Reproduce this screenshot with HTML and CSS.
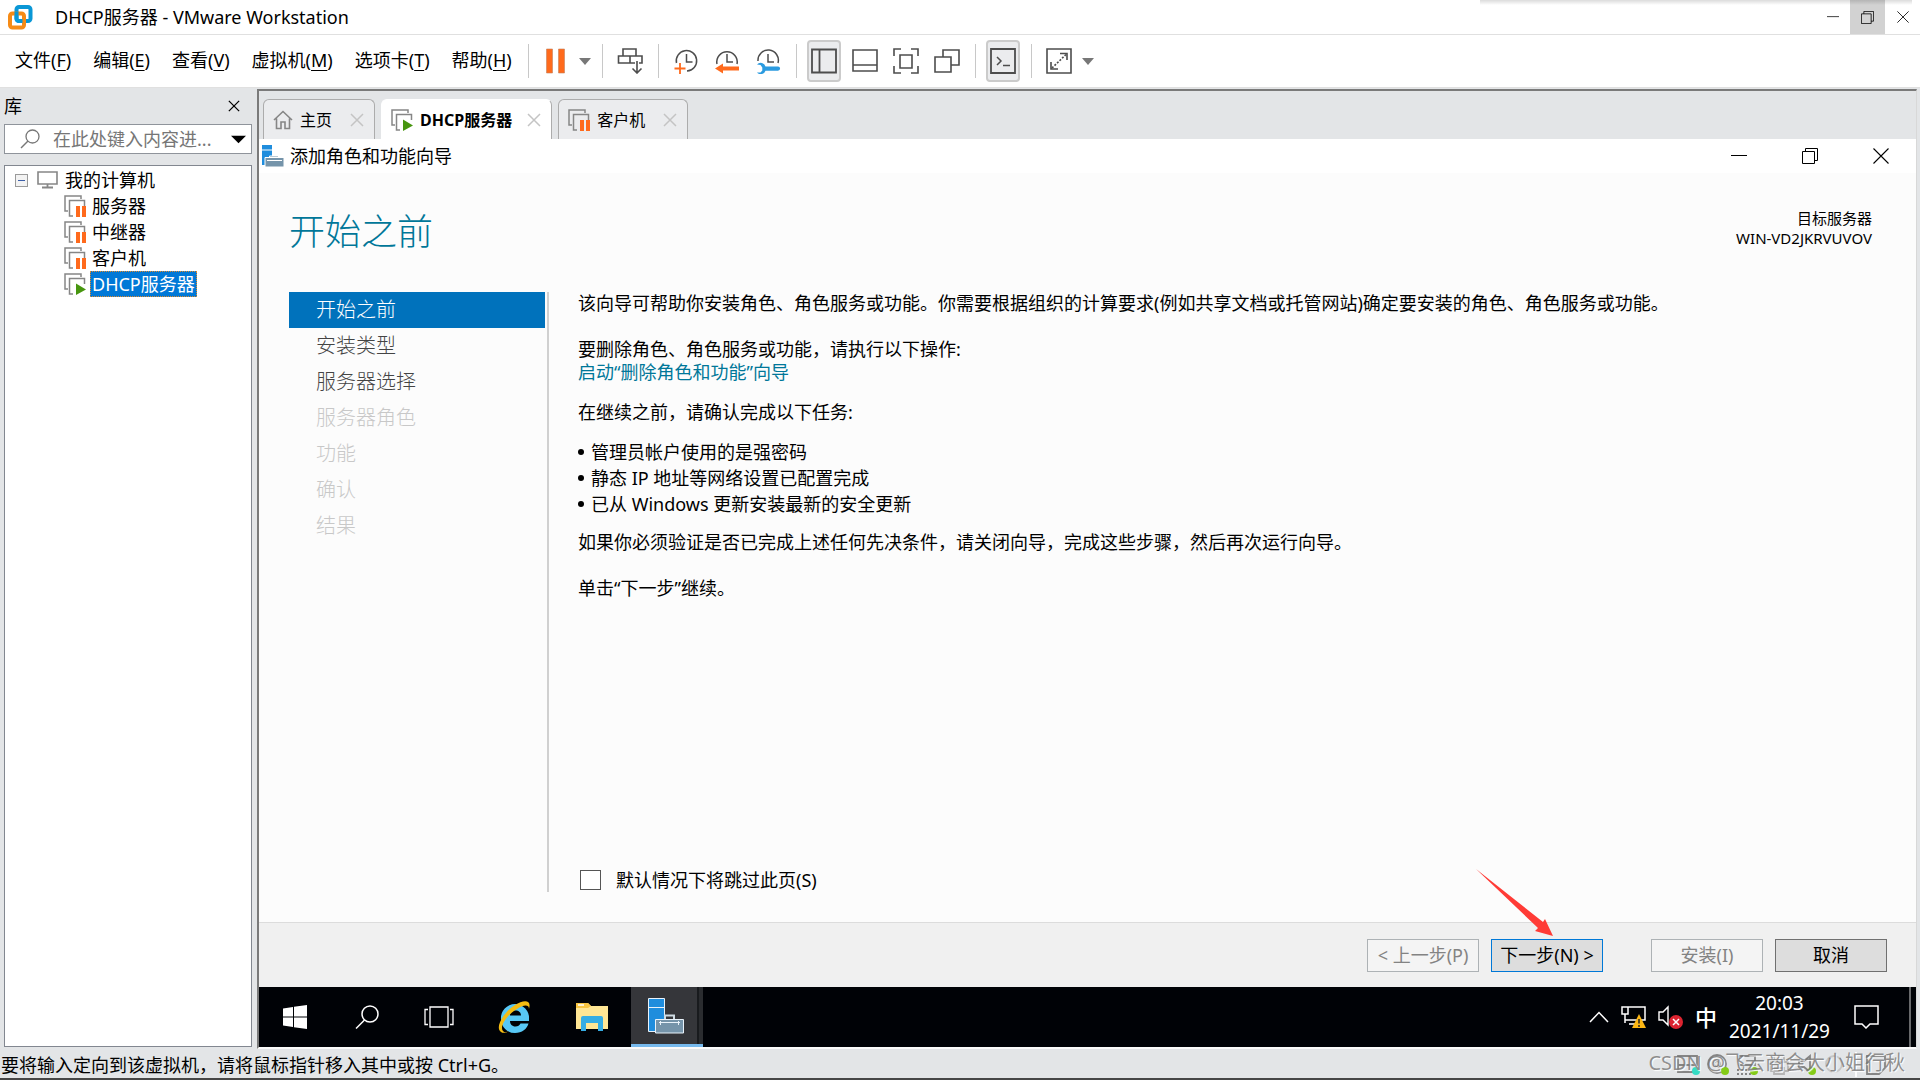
FILE: index.html
```html
<!DOCTYPE html>
<html lang="zh-CN">
<head>
<meta charset="utf-8">
<title>DHCP服务器 - VMware Workstation</title>
<link rel="stylesheet" href="styles.css">
</head>
<body>
<svg class="defs" aria-hidden="true">
  <symbol id="vm-base" viewBox="0 0 22 22">
    <path d="M4 16H1V1h16v3" fill="none" stroke="#868686" stroke-width="1.5"/>
    <path d="M9 21H5.500V5.500H20.500V11" fill="none" stroke="#868686" stroke-width="1.500"/>
  </symbol>
  <symbol id="vm-paused" viewBox="0 0 22 22">
    <use href="#vm-base"/>
    <path d="M12 11h4v11h-4zM18 11h4v11h-4z" fill="#ff6a1c"/>
  </symbol>
  <symbol id="vm-running" viewBox="0 0 22 22">
    <use href="#vm-base"/>
    <path d="M12 10.500v11.500L22 16.500z" fill="#47960f"/>
  </symbol>
  <symbol id="cross" viewBox="0 0 14 14">
    <path d="M1 1l12 12M13 1L1 13" fill="none" stroke="currentColor" stroke-width="1.500"/>
  </symbol>
  <symbol id="win-close" viewBox="0 0 16 16">
    <path d="M.5.500l15 15M15.500.500l-15 15" fill="none" stroke="currentColor" stroke-width="1.100"/>
  </symbol>
  <symbol id="win-restore" viewBox="0 0 16 16">
    <path d="M.500 3.500h12v12H.500zM3.500 3.500v-3h12v12h-3" fill="none" stroke="currentColor"/>
  </symbol>
  <symbol id="win-min" viewBox="0 0 16 16">
    <path d="M0 7.500h16" fill="none" stroke="currentColor"/>
  </symbol>
</svg>

<header class="titlebar">
  <div class="titlebar-shade"></div>
  <svg class="app-logo" viewBox="0 0 25 25" aria-hidden="true">
    <rect x="8.500" y="2" width="14" height="14" rx="2.500" fill="none" stroke="#0a97d6" stroke-width="4"/>
    <rect x="2" y="8.500" width="14" height="14" rx="2.500" fill="none" stroke="#f68b16" stroke-width="4"/>
    <path d="M8.500 6.500V13.500a2.500 2.500 0 0 0 2.500 2.500h3.500" fill="none" stroke="#0a97d6" stroke-width="4"/>
  </svg>
  <h1 class="app-title">DHCP服务器 - VMware Workstation</h1>
  <div class="win-controls">
    <button class="win-btn" aria-label="最小化"><svg class="i12"><use href="#win-min"/></svg></button>
    <button class="win-btn is-hover" aria-label="还原"><svg class="i13"><use href="#win-restore"/></svg></button>
    <button class="win-btn" aria-label="关闭"><svg class="i12"><use href="#win-close"/></svg></button>
  </div>
</header>

<nav class="toolbar">
  <div class="menus">
    <button class="menu">文件(<u>F</u>)</button>
    <button class="menu">编辑(<u>E</u>)</button>
    <button class="menu">查看(<u>V</u>)</button>
    <button class="menu">虚拟机(<u>M</u>)</button>
    <button class="menu">选项卡(<u>T</u>)</button>
    <button class="menu">帮助(<u>H</u>)</button>
  </div>
  <div class="tools">
    <button class="tool" aria-label="挂起"><svg viewBox="0 0 26 26"><path d="M3.500 1h6v24h-6zM15.500 1h6v24h-6z" fill="#ff6a1c" stroke="#c5825c" stroke-width=".6"/></svg></button>
    <button class="tool-caret" aria-label="电源选项"><svg viewBox="0 0 12 7"><path d="M0 0h12L6 7z" fill="#777"/></svg></button>
  </div>
  <div class="tools">
    <button class="tool" aria-label="发送 Ctrl+Alt+Del"><svg viewBox="0 0 26 26" fill="none" stroke="#4d4d4d" stroke-width="1.600"><path d="M6 8V1h13v7M13 15H1.500V8H25v7h-3M13 8v7h5M20 13v12M15.500 20.500L20 25l4.500-4.500"/></svg></button>
  </div>
  <div class="tools wide">
    <button class="tool" aria-label="拍摄快照"><svg viewBox="0 0 26 26"><path d="M3.500 15A10.200 10.200 0 1 1 14 23" fill="none" stroke="#4d4d4d" stroke-width="1.500"/><path d="M13.500 6v8h6" fill="none" stroke="#4d4d4d" stroke-width="1.500"/><path d="M1.500 20.500h11M7 15v11" stroke="#ff6a1c" stroke-width="1.800"/></svg></button>
    <button class="tool" aria-label="恢复快照"><svg viewBox="0 0 26 26"><path d="M3 16A10.200 10.200 0 1 1 23 16" fill="none" stroke="#4d4d4d" stroke-width="1.500"/><path d="M13 6v8h6" fill="none" stroke="#4d4d4d" stroke-width="1.500"/><path d="M1 20.500l8-5v3h16v4H9v3z" fill="#ff6a1c"/></svg></button>
    <button class="tool" aria-label="管理快照"><svg viewBox="0 0 26 26"><path d="M3 13A10.200 10.200 0 1 1 23 15" fill="none" stroke="#4d4d4d" stroke-width="1.500"/><path d="M13 6v8h6" fill="none" stroke="#4d4d4d" stroke-width="1.500"/><path d="M2 16.500a5 5 0 0 1 8.500 2H23a2 2 0 0 1 0 4.200H10.500A5 5 0 0 1 2 24.500h3.500l1.800-2v-3L5.500 17z" fill="#2b9be0"/></svg></button>
  </div>
  <div class="tools wide">
    <button class="tool is-on" aria-pressed="true" aria-label="显示库"><svg viewBox="0 0 26 26" fill="none" stroke="#4d4d4d" stroke-width="1.800"><path d="M1 1.500h24v23H1zM8.500 1.500v23"/></svg></button>
    <button class="tool" aria-label="缩略图栏"><svg viewBox="0 0 26 26" fill="none" stroke="#4d4d4d" stroke-width="1.600"><path d="M1 2h24v21H1zM1 17h24"/></svg></button>
    <button class="tool" aria-label="全屏"><svg viewBox="0 0 26 26" fill="none" stroke="#4d4d4d" stroke-width="1.600"><path d="M1 8V1h7M18 1h7v7M25 18v7h-7M8 25H1v-7M7 7h12v13H7z"/></svg></button>
    <button class="tool" aria-label="Unity 模式"><svg viewBox="0 0 26 26" fill="none" stroke="#4d4d4d" stroke-width="1.600"><path d="M1 9h16v15H1zM9 9V2h16v15h-8"/></svg></button>
  </div>
  <div class="tools">
    <button class="tool is-on" aria-pressed="true" aria-label="控制台视图"><svg viewBox="0 0 26 26" fill="none" stroke="#4d4d4d" stroke-width="1.800"><path d="M1 1h24v24H1z"/><path d="M7 9l4 4-4 4M13 17.500h7" stroke-width="1.500"/></svg></button>
  </div>
  <div class="tools">
    <button class="tool" aria-label="自由拉伸"><svg viewBox="0 0 26 26" fill="none" stroke="#4d4d4d" stroke-width="1.600"><path d="M1 1h24v24H1z"/><path d="M14 5.500h7V12M5 14v7h7"/><path d="M6 20L20 6.500" stroke-dasharray="2 1.500"/></svg></button>
    <button class="tool-caret" aria-label="拉伸选项"><svg viewBox="0 0 12 7"><path d="M0 0h12L6 7z" fill="#777"/></svg></button>
  </div>
</nav>

<div class="workspace">
  <aside class="library">
    <div class="library-head">
      <h2 class="library-title">库</h2>
      <button class="library-close" aria-label="关闭库"><svg class="i12"><use href="#cross"/></svg></button>
    </div>
    <div class="search">
      <svg class="search-icon" viewBox="0 0 20 20" aria-hidden="true"><circle cx="12.500" cy="7.500" r="6.500" fill="none" stroke="#777" stroke-width="1.300"/><path d="M8 12L1 19" stroke="#777" stroke-width="1.500"/></svg>
      <input class="search-input" type="text" aria-label="搜索库" placeholder="在此处键入内容进...">
      <button class="search-caret" aria-label="搜索选项"><svg viewBox="0 0 16 8"><path d="M0 0h16L8 8z"/></svg></button>
    </div>
    <div class="tree">
      <div class="tree-root">
        <button class="tree-toggle" aria-label="折叠"><svg viewBox="0 0 13 13"><rect x=".5" y=".5" width="12" height="12" fill="#f3f3f3" stroke="#9a9a9a"/><path d="M3 6.500h7" stroke="#3c5fa8"/></svg></button>
        <svg class="tree-pc" viewBox="0 0 21 18" aria-hidden="true"><path d="M1 1h19v12H1z" fill="none" stroke="#868686" stroke-width="1.600"/><path d="M10.500 13v3M5 16.500h11" stroke="#868686" stroke-width="1.800"/></svg>
        <span class="tree-label">我的计算机</span>
      </div>
      <ul class="tree-list">
        <li><button class="tree-item"><svg class="i22"><use href="#vm-paused"/></svg><span class="tree-label">服务器</span></button></li>
        <li><button class="tree-item"><svg class="i22"><use href="#vm-paused"/></svg><span class="tree-label">中继器</span></button></li>
        <li><button class="tree-item"><svg class="i22"><use href="#vm-paused"/></svg><span class="tree-label">客户机</span></button></li>
        <li><button class="tree-item is-selected"><svg class="i22"><use href="#vm-running"/></svg><span class="tree-label">DHCP服务器</span></button></li>
      </ul>
    </div>
  </aside>

  <main class="console">
    <div class="tabs">
      <div class="tab">
        <svg class="i20" viewBox="0 0 20 20" aria-hidden="true"><path d="M1 10L10 1.500 19 10M3.500 8.500V18.500H8V12h4v6.500h4.500V8.500" fill="none" stroke="#868686" stroke-width="1.600"/></svg>
        <button class="tab-label">主页</button>
        <button class="tab-close" aria-label="关闭主页"><svg class="i14"><use href="#cross"/></svg></button>
      </div>
      <div class="tab is-active">
        <svg class="i22"><use href="#vm-running"/></svg>
        <button class="tab-label">DHCP服务器</button>
        <button class="tab-close" aria-label="关闭 DHCP服务器"><svg class="i14"><use href="#cross"/></svg></button>
      </div>
      <div class="tab">
        <svg class="i22"><use href="#vm-paused"/></svg>
        <button class="tab-label">客户机</button>
        <button class="tab-close" aria-label="关闭客户机"><svg class="i14"><use href="#cross"/></svg></button>
      </div>
    </div>

    <section class="wizard">
      <header class="wizard-bar">
        <svg class="i22" viewBox="0 0 22 22" aria-hidden="true"><path d="M0 0h10v20H0z" fill="#1f8ddd"/><path d="M0 5h10" stroke="#fff" stroke-width="1"/><path d="M7.500 13v-2h9v2M3 12.500h19V22H3z" fill="#7594aa" stroke="#fff" stroke-width="1"/><path d="M5 15.500h15" stroke="#fff"/></svg>
        <h2 class="wizard-caption">添加角色和功能向导</h2>
        <div class="vm-controls">
          <button class="vm-btn" aria-label="最小化向导"><svg class="i16"><use href="#win-min"/></svg></button>
          <button class="vm-btn" aria-label="还原向导"><svg class="i16"><use href="#win-restore"/></svg></button>
          <button class="vm-btn" aria-label="关闭向导"><svg class="i16"><use href="#win-close"/></svg></button>
        </div>
      </header>

      <div class="wizard-head">
        <h3 class="wizard-title">开始之前</h3>
        <div class="target">
          <div>目标服务器</div>
          <div>WIN-VD2JKRVUVOV</div>
        </div>
      </div>

      <div class="wizard-body">
        <nav class="steps">
          <button class="step is-current" aria-current="step">开始之前</button>
          <button class="step">安装类型</button>
          <button class="step">服务器选择</button>
          <button class="step" disabled>服务器角色</button>
          <button class="step" disabled>功能</button>
          <button class="step" disabled>确认</button>
          <button class="step" disabled>结果</button>
        </nav>
        <div class="page">
          <p class="para gap-line">该向导可帮助你安装角色、角色服务或功能。你需要根据组织的计算要求(例如共享文档或托管网站)确定要安装的角色、角色服务或功能。</p>
          <p class="para">要删除角色、角色服务或功能，请执行以下操作:</p>
          <p class="para gap-block"><a class="link" href="#remove">启动“删除角色和功能”向导</a></p>
          <p class="para gap-list">在继续之前，请确认完成以下任务:</p>
          <ul class="tasks">
            <li>管理员帐户使用的是强密码</li>
            <li>静态 IP 地址等网络设置已配置完成</li>
            <li>已从 Windows 更新安装最新的安全更新</li>
          </ul>
          <p class="para gap-line">如果你必须验证是否已完成上述任何先决条件，请关闭向导，完成这些步骤，然后再次运行向导。</p>
          <p class="para">单击“下一步”继续。</p>
          <label class="skip"><input class="skip-box" type="checkbox">默认情况下将跳过此页(S)</label>
        </div>
      </div>

      <footer class="wizard-foot">
        <button class="btn" disabled>&lt; 上一步(P)</button>
        <div class="next">
          <button class="btn is-default">下一步(N) &gt;</button>
          <svg class="pointer" viewBox="0 0 78 68" aria-hidden="true"><path d="M0 0L67 53 69 50 77 67 59 62 62 59z" fill="#ff3b36"/></svg>
        </div>
        <button class="btn install" disabled>安装(I)</button>
        <button class="btn">取消</button>
      </footer>
    </section>

    <div class="taskbar">
      <button class="task" aria-label="开始"><svg width="24" height="24" viewBox="0 0 24 24"><path d="M0 3.500L10 2v9.500H0zM11 1.800L24 0v11.500H11zM0 12.500h10V22L0 20.500zM11 12.500h13V24l-13-1.800z" fill="#fff"/></svg></button>
      <button class="task" aria-label="搜索"><svg width="24" height="24" viewBox="0 0 24 24" fill="none" stroke="#fff" stroke-width="1.500"><circle cx="15" cy="9" r="8"/><path d="M9.500 15L1 23.500"/></svg></button>
      <button class="task" aria-label="任务视图"><svg width="30" height="22" viewBox="0 0 30 22" fill="none" stroke="#fff" stroke-width="1.300"><path d="M6 1h18v20H6zM4 3.500H1v15h3M26 3.500h3v15h-3"/></svg></button>
      <button class="task app" aria-label="Internet Explorer"><svg width="36" height="36" viewBox="0 0 36 36"><path d="M19 5a14 14 0 0 1 14 15v2H14c0 3 2 5.500 5.500 5.500 2.500 0 4-1 5-3h8C31 30 26 34 19 34A14 14 0 0 1 5 20 14 14 0 0 1 19 5zM14 16.500h11c0-3-2.200-5-5.500-5s-5.500 2-5.500 5z" fill="#58c8f5" fill-rule="evenodd"/><path d="M5 33C-2 28 9 12 19 6 27 1 36 0 33 10c0-5-6-4-12 0C12 15 3 27 7 32c2 2 4 1 6 0-3 2-6 2.500-8 1z" fill="#f5bd12"/></svg></button>
      <button class="task app" aria-label="文件资源管理器"><svg width="34" height="28" viewBox="0 0 34 28"><path d="M1 0h12l3 3h17v23H1z" fill="#ffe694"/><path d="M1 0h12l3 3-3 2H1z" fill="#f8c542"/><path d="M3 2h6" stroke="#fff" stroke-width="1.500"/><path d="M6 28V15q0-2 2-2h18q2 0 2 2v13h-5v-8H11v8z" fill="#35ade4"/></svg></button>
      <button class="task is-open" aria-label="服务器管理器"><svg width="36" height="36" viewBox="0 0 36 36"><path d="M.5.500h16v33H.500z" fill="#1f8ddd" stroke="#e8f2fa"/><path d="M0 9.500h17" stroke="#e8f2fa"/><path d="M17 21v-3.500h9V21" fill="none" stroke="#cfdbe3" stroke-width="2"/><path d="M7.500 21.500h28v13.500h-28z" fill="#7594aa" stroke="#e8f2fa"/><path d="M11 24.500h21M12.500 23v4M30.500 23v4" stroke="#e8f2fa"/></svg></button>
      <div class="tray">
        <svg width="20" height="12" viewBox="0 0 20 12" fill="none" stroke="#fff" stroke-width="1.500"><path d="M1 11l9-9.500L19 11"/></svg>
        <svg width="25" height="24" viewBox="0 0 25 24"><path d="M1 2h6v7H1zM4 9v9M7 2h17v13H4M8 19h8" fill="none" stroke="#fff" stroke-width="1.500"/><path d="M18 9l7 14H11z" fill="#fcb714"/><path d="M18 14v4.500M18 20v2" stroke="#222" stroke-width="1.500"/></svg>
        <svg width="25" height="24" viewBox="0 0 25 24"><path d="M1 7h4l5-5v18l-5-5H1z" fill="none" stroke="#fff" stroke-width="1.400"/><circle cx="18" cy="17" r="7" fill="#dc2430"/><path d="M15 14l6 6M21 14l-6 6" stroke="#fff" stroke-width="1.500"/></svg>
        <span class="ime">中</span>
        <div class="clock">
          <div>20:03</div>
          <div>2021/11/29</div>
        </div>
        <svg width="25" height="24" viewBox="0 0 25 24" fill="none" stroke="#fff" stroke-width="1.500"><path d="M1 1h23v18h-8l-4 4-4-4H1z"/></svg>
      </div>
    </div>
  </main>
</div>

<footer class="status">
  <span class="status-text">要将输入定向到该虚拟机，请将鼠标指针移入其中或按 Ctrl+G。</span>
  <svg class="devices" width="216" height="25" viewBox="0 0 216 25" fill="none" stroke="#858585" stroke-width="1.800" aria-hidden="true">
    <path d="M2 4h19v9H2zM2 13v7h17"/><circle cx="41" cy="12" r="9"/><circle cx="41" cy="12" r="3"/>
    <path d="M63 4h16v9H63z"/><path d="M61 18h18M61 22h18" stroke-dasharray="2 2"/>
    <path d="M94 10h18v9H94zM98 10V4h10v6M98 16h10v6H98z" stroke="#b5b5b5"/>
    <path d="M123 9h5l6-5v16l-6-5h-5z"/><circle cx="158" cy="12" r="8" stroke="#c5c5c5"/>
    <path d="M191 4h18v12l-6 6h-12z"/>
    <path d="M180 0v25" stroke="#fff"/>
    <g stroke="none"><circle cx="20" cy="19" r="4" fill="#35dbc4"/><circle cx="49" cy="19" r="4" fill="#84cb17"/><circle cx="78" cy="19" r="4" fill="#84cb17"/><circle cx="136" cy="19" r="4" fill="#84cb17"/></g>
  </svg>
  <span class="watermark">CSDN @飞云商会大小姐行秋</span>
</footer>
</body>
</html>
```
FILE: styles.css
```css
* { box-sizing: border-box; }
html, body { height: 100%; }
body {
  margin: 0;
  display: flex;
  flex-direction: column;
  overflow: hidden;
  background: #e3e5e7;
  color: #000;
  font: 18px/24px "Noto Sans", "Noto Sans CJK SC", sans-serif;
}
h1, h2, h3, p, ul { margin: 0; padding: 0; font: inherit; }
ul { list-style: none; }
button { margin: 0; padding: 0; border: 0; background: none; color: inherit; font: inherit; white-space: nowrap; }
svg { display: block; flex: none; }
.defs { position: absolute; width: 0; height: 0; }
.i12 { width: 12px; height: 12px; }
.i13 { width: 13px; height: 13px; }
.i14 { width: 14px; height: 14px; }
.i16 { width: 16px; height: 16px; }
.i20 { width: 20px; height: 20px; }
.i22 { width: 22px; height: 22px; }

/* Host window title bar */
.titlebar {
  position: relative;
  flex: none;
  display: flex;
  align-items: center;
  height: 35px;
  padding-left: 8px;
  background: #fff;
  border-bottom: 1px solid #e0e0e0;
}
.titlebar-shade {
  position: absolute;
  top: 0;
  right: 8px;
  width: 432px;
  height: 5px;
  background: linear-gradient(rgba(0, 0, 0, .14), rgba(0, 0, 0, 0));
}
.app-logo { width: 25px; height: 25px; }
.app-title { margin-left: 22px; }
.win-controls { display: flex; align-self: stretch; margin-left: auto; }
.win-btn { display: flex; align-items: center; justify-content: center; width: 35px; }
.win-btn.is-hover { background: #d2d2d2; }

/* Menus and tool buttons */
.toolbar {
  flex: none;
  display: flex;
  align-items: center;
  height: 53px;
  padding-left: 15px;
  background: #fff;
  border-bottom: 1px solid #e0e0e0;
}
.menus { display: flex; gap: 22px; width: 513px; padding-bottom: 3px; }
.menu { line-height: 26px; }
.menu u { text-underline-offset: 3px; text-decoration-thickness: 1px; }
.tools { display: flex; align-items: center; gap: 6px; height: 34px; padding: 0 11px 0 10px; border-left: 1px solid #c8c8c8; }
.tools.wide { gap: 7px; }
.tool { display: flex; align-items: center; justify-content: center; width: 34px; height: 42px; border-radius: 4px; }
.tool svg { width: 26px; height: 26px; }
.tool.is-on { background: #ebecee; border: 2px solid #cbcbcb; }
.tool-caret svg { width: 12px; height: 7px; }

/* Library side panel */
.workspace { flex: 1; min-height: 0; display: flex; gap: 5px; padding-right: 3px; }
.library { flex: none; display: flex; flex-direction: column; width: 252px; padding: 0 0 2px 4px; }
.library-head { display: flex; align-items: center; justify-content: space-between; height: 36px; padding-right: 12px; }
.search { display: flex; align-items: center; height: 30px; padding: 0 5px 0 15px; background: #fff; border: 1px solid #8f949b; }
.search-icon { width: 20px; height: 20px; }
.search-input { flex: 1; min-width: 0; margin-left: 13px; padding: 0; border: 0; outline: 0; background: none; font: inherit; color: #000; }
.search-input::placeholder { color: #767676; opacity: 1; }
.search-caret svg { width: 15px; height: 9px; }
.tree { flex: 1; margin-top: 11px; padding: 1px 10px; background: #fff; border: 1px solid #828790; }
.tree-root { display: flex; align-items: center; height: 26px; }
.tree-toggle svg { width: 13px; height: 13px; }
.tree-pc { width: 21px; height: 18px; margin: 0 5px 0 9px; }
.tree-list { padding-left: 49px; }
.tree-item { display: flex; align-items: center; gap: 4px; height: 26px; }
.tree-label { padding: 0 1px; border: 1px solid transparent; }
.is-selected .tree-label { background: #0078d7; border: 1px dotted #e08a2c; color: #fff; }

/* Console with its tabs */
.console { flex: 1; min-width: 0; display: flex; flex-direction: column; margin-top: 1px; border: 2px solid #7a7a7a; border-right: 1px solid #d8d8d8; border-bottom: 2px solid #fafafa; }
.tabs { flex: none; display: flex; align-items: flex-end; gap: 6px; height: 48px; padding-left: 4px; font-size: 16px; }
.tab { display: flex; align-items: center; height: 40px; padding: 0 10px 0 9px; background: #ebecee; border: 1px solid #acacac; border-bottom: 0; border-radius: 6px 6px 0 0; }
.tab.is-active { background: #fff; border-color: #fff #acacac #fff #fff; font-weight: 700; }
.tab-label { margin: 0 18px 0 7px; }
.tab.is-active .tab-label { margin-right: 15px; }
.tab-close { color: #c4c4c4; }

/* Wizard in the guest system */
.wizard { flex: 1; min-height: 0; display: flex; flex-direction: column; background: #fcfcfc; }
.wizard-bar { flex: none; display: flex; align-items: center; gap: 6px; height: 34px; padding-left: 3px; background: #fff; }
.vm-controls { display: flex; align-self: stretch; margin-left: auto; }
.vm-btn { display: flex; align-items: center; justify-content: center; width: 71px; }
.wizard-head { flex: none; display: flex; justify-content: space-between; height: 119px; padding: 35px 44px 0 30px; }
.wizard-title { color: #007799; font-size: 36px; line-height: 48px; font-weight: 300; }
.target { font-size: 15px; line-height: 20px; text-align: right; }
.wizard-body { flex: 1; min-height: 0; display: flex; padding: 0 30px 30px; }
.steps { flex: none; width: 260px; padding-right: 2px; border-right: 2px solid #d0d0d0; }
.step { display: block; width: 256px; height: 36px; padding: 0 0 0 27px; color: #444; font-size: 20px; font-weight: 300; text-align: left; }
.step.is-current { background: #0072bc; color: #fff; }
.step:disabled { color: #c8c8c8; }
.page { flex: 1; display: flex; flex-direction: column; padding-left: 29px; }
.para { line-height: 23px; }
.gap-line { margin-bottom: 23px; }
.gap-block { margin-bottom: 17px; }
.gap-list { margin-bottom: 15px; }
.link { color: #007799; text-decoration: none; }
.tasks { margin-bottom: 14px; }
.tasks li { display: flex; align-items: center; gap: 7px; line-height: 26px; }
.tasks li::before { content: ""; width: 6px; height: 6px; border-radius: 50%; background: #000; }
.skip { display: flex; align-items: center; gap: 15px; margin-top: auto; }
.skip-box { appearance: none; width: 21px; height: 20px; margin: 0 0 0 2px; background: #fff; border: 1px solid #555; }
.wizard-foot { flex: none; display: flex; align-items: center; justify-content: flex-end; gap: 12px; height: 65px; padding-right: 29px; background: #f0f0f0; border-top: 1px solid #dcdcdc; }
.btn { width: 112px; height: 33px; background: #dddddd; border: 1px solid #707070; }
.btn:disabled { background: #f4f4f4; border-color: #adb2b5; color: #838383; }
.btn.is-default { border-color: #0078d7; }
.btn.install { margin-left: 36px; }
.next { position: relative; }
.pointer { position: absolute; left: -15px; top: -70px; width: 78px; height: 68px; }

/* Guest taskbar */
.taskbar { flex: none; display: flex; height: 60px; background: #000206; color: #fff; }
.task { display: flex; align-items: center; justify-content: center; width: 72px; }
.task.app { width: 78px; }
.task.is-open { background: linear-gradient(90deg, #35363a 66px, #191b1e 66px, #191b1e 68px, #2a2c2f 68px); border-bottom: 3px solid #76b9ed; padding-right: 2px; }
.tray { display: flex; align-items: center; gap: 12px; margin-left: auto; padding-right: 30px; border-right: 2px solid #68696b; margin-right: 5px; }
.ime { font-size: 22px; font-weight: 500; }
.clock { margin-right: 12px; font-size: 19px; line-height: 28px; text-align: center; }

/* Host status bar */
.status { position: relative; flex: none; display: flex; align-items: center; justify-content: space-between; height: 31px; padding: 2px 28px 0 1px; border-bottom: 2px solid #464646; }
.watermark { position: absolute; right: 15px; top: 0; color: rgba(110, 110, 110, .75); font-size: 20px; line-height: 28px; text-shadow: 1px 1px 1px #fff; }
```
